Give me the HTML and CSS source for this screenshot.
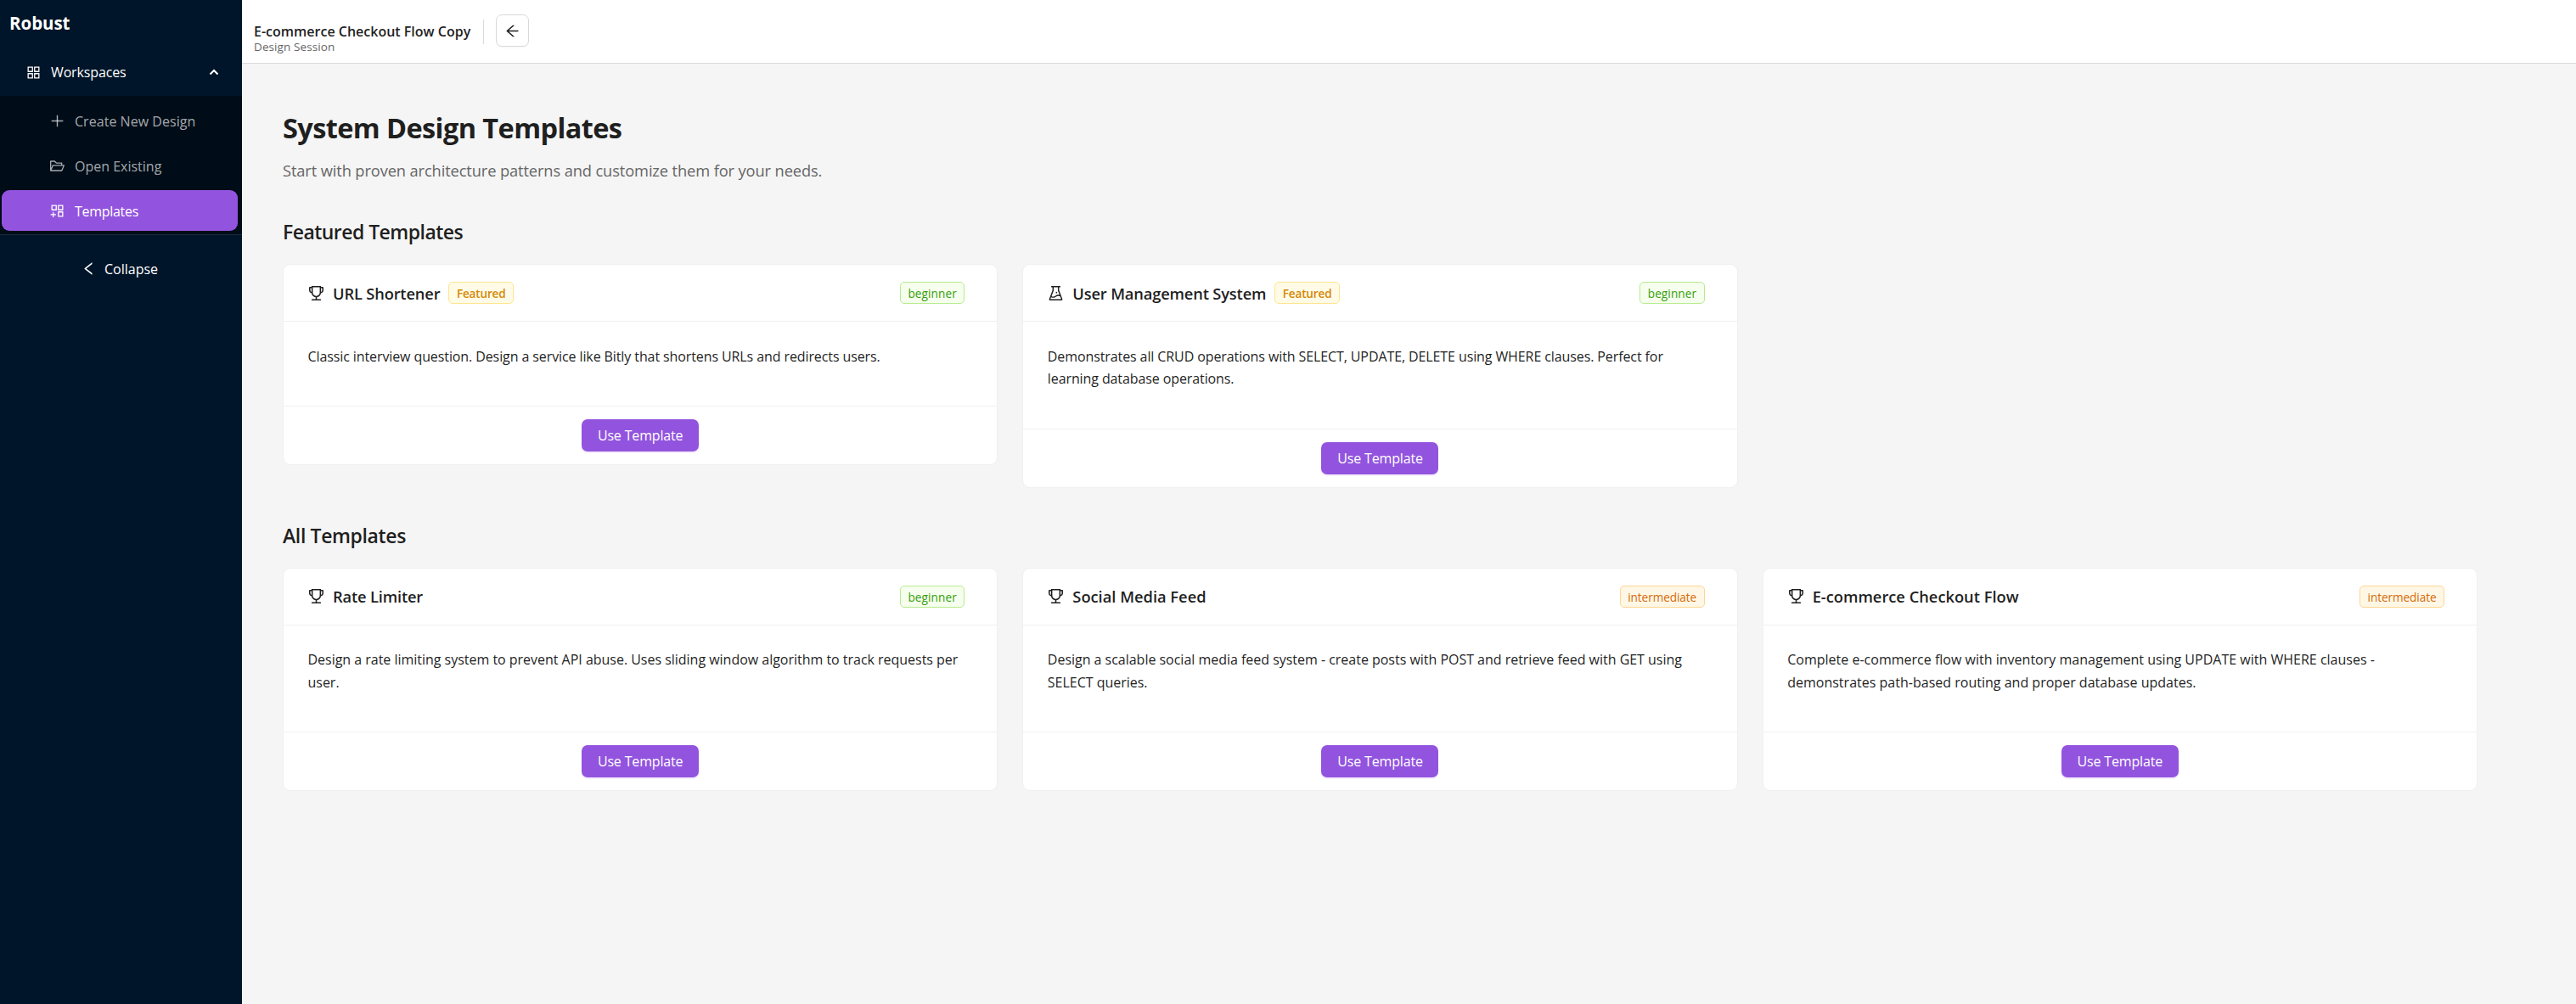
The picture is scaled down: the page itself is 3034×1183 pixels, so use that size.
FILE: index.html
```html
<!DOCTYPE html>
<html lang="en">
<head>
    <meta charset="UTF-8">
    <meta name="viewport" content="width=device-width, initial-scale=1.0">
    <title>Robust - Templates</title>
    <link rel="stylesheet" href="styles.css">
</head>
<body>

    <svg class="sprite" width="0" height="0">
        <symbol id="i-apps" viewBox="64 64 896 896"><path d="M464 144H160c-8.800 0-16 7.200-16 16v304c0 8.800 7.200 16 16 16h304c8.800 0 16-7.200 16-16V160c0-8.800-7.200-16-16-16zm-52 268H212V212h200v200zm452-268H560c-8.800 0-16 7.200-16 16v304c0 8.800 7.200 16 16 16h304c8.800 0 16-7.200 16-16V160c0-8.800-7.200-16-16-16zm-52 268H612V212h200v200zM464 544H160c-8.800 0-16 7.200-16 16v304c0 8.800 7.200 16 16 16h304c8.800 0 16-7.200 16-16V560c0-8.800-7.200-16-16-16zm-52 268H212V612h200v200zm452-268H560c-8.800 0-16 7.200-16 16v304c0 8.800 7.200 16 16 16h304c8.800 0 16-7.200 16-16V560c0-8.800-7.200-16-16-16zm-52 268H612V612h200v200z"/></symbol>
        <symbol id="i-apps-add" viewBox="64 64 896 896"><path d="M464 144H160c-8.800 0-16 7.200-16 16v304c0 8.800 7.200 16 16 16h304c8.800 0 16-7.200 16-16V160c0-8.800-7.200-16-16-16zm-52 268H212V212h200v200zm452-268H560c-8.800 0-16 7.200-16 16v304c0 8.800 7.200 16 16 16h304c8.800 0 16-7.200 16-16V160c0-8.800-7.200-16-16-16zm-52 268H612V212h200v200zm52 132H560c-8.800 0-16 7.200-16 16v304c0 8.800 7.200 16 16 16h304c8.800 0 16-7.200 16-16V560c0-8.800-7.200-16-16-16zm-52 268H612V612h200v200zM424 712H296V584c0-4.400-3.600-8-8-8h-48c-4.400 0-8 3.600-8 8v128H104c-4.400 0-8 3.600-8 8v48c0 4.400 3.600 8 8 8h128v128c0 4.400 3.600 8 8 8h48c4.400 0 8-3.600 8-8V776h128c4.400 0 8-3.600 8-8v-48c0-4.400-3.600-8-8-8z"/></symbol>
        <symbol id="i-plus" viewBox="64 64 896 896"><path d="M482 152h60q8 0 8 8v704q0 8-8 8h-60q-8 0-8-8V160q0-8 8-8z"/><path d="M160 474h704q8 0 8 8v60q0 8-8 8H160q-8 0-8-8v-60q0-8 8-8z"/></symbol>
        <symbol id="i-folder" viewBox="64 64 896 896"><path d="M928 444H820V330.400c0-17.700-14.300-32-32-32H473L355.700 186.200a8.150 8.150 0 00-5.500-2.200H96c-17.700 0-32 14.300-32 32v592c0 17.700 14.300 32 32 32h698c13 0 24.800-7.900 29.700-20l134-332c1.500-3.800 2.300-7.900 2.300-12 0-17.700-14.300-32-32-32zM136 256h188.500l119.600 114.400H748V444H238c-13 0-24.800 7.900-29.700 20L136 643.200V256zm635.300 512H159l103.300-256h612.400L771.300 768z"/></symbol>
        <symbol id="i-left" viewBox="64 64 896 896"><path d="M724 218.300V141c0-6.700-7.700-10.400-12.900-6.300L260.300 486.800a31.860 31.860 0 000 50.300l450.800 352.100c5.300 4.100 12.900.4 12.900-6.300v-77.300c0-4.900-2.300-9.600-6.100-12.600l-360-281 360-281.100c3.800-3 6.100-7.700 6.100-12.600z"/></symbol>
        <symbol id="i-arrow" viewBox="64 64 896 896"><path d="M872 474H286.900l350.200-304c5.600-4.900 2.200-14-5.200-14h-88.500c-3.900 0-7.600 1.400-10.500 3.900L155 487.800a31.960 31.960 0 000 48.300L535.100 866c1.500 1.300 3.300 2 5.200 2h91.500c7.400 0 10.800-9.200 5.200-14L286.900 550H872c4.400 0 8-3.600 8-8v-60c0-4.400-3.600-8-8-8z"/></symbol>
        <symbol id="i-trophy" viewBox="64 64 896 896"><path d="M868 160h-92v-40c0-4.400-3.600-8-8-8H256c-4.400 0-8 3.600-8 8v40h-92a44 44 0 00-44 44v148c0 81.700 60 149.600 138.200 162C265.700 630.200 359 721.700 476 734.500v105.200H280c-17.700 0-32 14.300-32 32V904c0 4.400 3.600 8 8 8h512c4.400 0 8-3.600 8-8v-32.300c0-17.700-14.300-32-32-32H548V734.500C665 721.700 758.300 630.200 773.800 514 852 501.600 912 433.700 912 352V204a44 44 0 00-44-44zM184 352V232h64v207.600a91.990 91.990 0 01-64-87.600zm520 128c0 49.100-19.100 95.400-53.900 130.100-34.800 34.800-81 53.900-130.100 53.900h-16c-49.100 0-95.400-19.100-130.100-53.900-34.800-34.800-53.900-81-53.900-130.100V184h384v296zm136-128c0 41-26.900 75.800-64 87.600V232h64v120z"/></symbol>
        <symbol id="i-flask" viewBox="64 64 896 896"><path d="M512 472a40 40 0 1080 0 40 40 0 10-80 0zm367 352.900L696.300 352V178H768v-68H256v68h71.700v174L145 824.900c-2.800 7.400-4.300 15.200-4.300 23.100 0 35.300 28.700 64 64 64h614.600c7.900 0 15.700-1.500 23.100-4.300 33-12.700 49.400-49.800 36.600-82.800zM395.700 364.700V180h232.600v184.700L719.200 600c-20.700-5.300-42.100-8-63.900-8-61.200 0-119.200 21.500-165.300 60a188.780 188.780 0 01-121.300 43.900c-32.700 0-64.100-8.300-91.800-23.700l118.800-307.500zM210.500 844l41.700-107.800c35.700 18.100 75.400 27.800 116.600 27.800 61.200 0 119.200-21.500 165.300-60 33.900-28.200 76.300-43.900 121.300-43.900 35 0 68.400 9.500 97.600 27.100L813.500 844h-603z"/></symbol>
    </svg>

    <div class="layout">
        <aside class="sidebar">
            <div class="brand">Robust</div>
            <div class="menu-title">
                <svg class="icon"><use href="#i-apps"/></svg>
                <span>Workspaces</span>
                <svg class="chevron" viewBox="0 0 12 8"><path d="M1.500 6.500 6 2l4.500 4.500"/></svg>
            </div>
            <nav class="submenu">
                <a class="item create"><svg class="icon"><use href="#i-plus"/></svg><span>Create New Design</span></a>
                <a class="item"><svg class="icon"><use href="#i-folder"/></svg><span>Open Existing</span></a>
                <a class="item active"><svg class="icon"><use href="#i-apps-add"/></svg><span>Templates</span></a>
            </nav>
            <div class="collapse"><svg class="icon"><use href="#i-left"/></svg><span>Collapse</span></div>
        </aside>

        <div class="main">
            <header class="topbar">
                <div class="session">
                    <div class="session-name">E-commerce Checkout Flow Copy</div>
                    <div class="session-type">Design Session</div>
                </div>
                <div class="divider"></div>
                <button class="back"><svg class="icon"><use href="#i-arrow"/></svg></button>
            </header>

            <main class="content">
                <h1>System Design Templates</h1>
                <p class="intro">Start with proven architecture patterns and customize them for your needs.</p>

                <h2>Featured Templates</h2>
                <div class="cards">
                    <div class="card">
                        <div class="card-head">
                            <svg class="icon"><use href="#i-trophy"/></svg>
                            <h3>URL Shortener</h3>
                            <span class="tag gold">Featured</span>
                            <span class="tag level green">beginner</span>
                        </div>
                        <p class="desc tight">Classic interview question. Design a service like Bitly that shortens URLs and redirects users.</p>
                        <div class="card-foot"><button class="use">Use Template</button></div>
                    </div>
                    <div class="card">
                        <div class="card-head">
                            <svg class="icon"><use href="#i-flask"/></svg>
                            <h3>User Management System</h3>
                            <span class="tag gold">Featured</span>
                            <span class="tag level green">beginner</span>
                        </div>
                        <p class="desc tight">Demonstrates all CRUD operations with SELECT, UPDATE, DELETE using WHERE clauses. Perfect for learning database operations.</p>
                        <div class="card-foot"><button class="use">Use Template</button></div>
                    </div>
                </div>

                <h2 class="all">All Templates</h2>
                <div class="cards">
                    <div class="card">
                        <div class="card-head">
                            <svg class="icon"><use href="#i-trophy"/></svg>
                            <h3>Rate Limiter</h3>
                            <span class="tag level green">beginner</span>
                        </div>
                        <p class="desc">Design a rate limiting system to prevent API abuse. Uses sliding window algorithm to track requests per user.</p>
                        <div class="card-foot"><button class="use">Use Template</button></div>
                    </div>
                    <div class="card">
                        <div class="card-head">
                            <svg class="icon"><use href="#i-trophy"/></svg>
                            <h3 class="wide">Social Media Feed</h3>
                            <span class="tag level orange">intermediate</span>
                        </div>
                        <p class="desc">Design a scalable social media feed system - create posts with POST and retrieve feed with GET using SELECT queries.</p>
                        <div class="card-foot"><button class="use">Use Template</button></div>
                    </div>
                    <div class="card">
                        <div class="card-head">
                            <svg class="icon"><use href="#i-trophy"/></svg>
                            <h3 class="wide">E-commerce Checkout Flow</h3>
                            <span class="tag level orange">intermediate</span>
                        </div>
                        <p class="desc wide">Complete e-commerce flow with inventory management using UPDATE with WHERE clauses - demonstrates path-based routing and proper database updates.</p>
                        <div class="card-foot"><button class="use">Use Template</button></div>
                    </div>
                </div>
            </main>
        </div>
    </div>

</body>
</html>
```

FILE: styles.css
```css
* {
    box-sizing: border-box;
}
body {
    margin: 0;
    font-family: "Open Sans", "Noto Sans", sans-serif;
    font-size: 16px;
    color: #1f1f1f;
    background: #f5f5f5;
}
h1, h2, h3, p {
    margin: 0;
}
button {
    font: inherit;
    padding: 0;
    cursor: pointer;
}
.sprite {
    display: none;
}
.icon {
    width: 17px;
    height: 17px;
    fill: currentColor;
    flex: none;
}
.layout {
    display: flex;
    min-height: 100vh;
}

/* Sidebar */
.sidebar {
    width: 285px;
    flex: none;
    background: #001529;
    color: #fff;
}
.brand {
    height: 57px;
    padding-left: 11px;
    font-size: 20.5px;
    font-weight: 700;
    line-height: 54px;
    letter-spacing: -0.05px;
}
.menu-title {
    display: flex;
    align-items: center;
    height: 56px;
    padding: 0 27px 0 31px;
    letter-spacing: -0.14px;
}
.menu-title span {
    margin-left: 12px;
}
.chevron {
    width: 12px;
    height: 8px;
    margin-left: auto;
    fill: none;
    stroke: #fff;
    stroke-width: 2;
}
.submenu {
    display: flex;
    flex-direction: column;
    gap: 5px;
    padding: 5px 5px 4px 2px;
    background: #000c17;
    border-bottom: 1px solid #1a2c3e;
}
.item {
    display: flex;
    align-items: center;
    gap: 12px;
    height: 48px;
    padding-left: 57px;
    border-radius: 9px;
    color: rgba(255, 255, 255, 0.65);
}
.item span {
    padding-top: 2px;
}
.item.create {
    letter-spacing: 0.04px;
}
.item.active {
    background: #9254de;
    color: #fff;
    letter-spacing: -0.29px;
}
.collapse {
    display: flex;
    align-items: center;
    gap: 10px;
    height: 79px;
    padding-left: 96px;
}

/* Header */
.main {
    flex: 1;
}
.topbar {
    display: flex;
    align-items: center;
    height: 75px;
    padding-left: 14px;
    background: #fff;
    border-bottom: 1px solid #d9d9d9;
}
.session {
    padding-top: 14px;
}
.session-name {
    font-weight: 600;
    line-height: 22px;
}
.session-type {
    font-size: 13.500px;
    line-height: 14px;
    letter-spacing: 0.1px;
    color: #666;
}
.divider {
    width: 1px;
    height: 29px;
    margin: 0 14px 0 15px;
    background: #d9d9d9;
}
.back {
    display: flex;
    align-items: center;
    justify-content: center;
    width: 39px;
    height: 38px;
    margin-bottom: 2px;
    color: #1f1f1f;
    background: #fff;
    border: 1px solid #d9d9d9;
    border-radius: 7px;
    box-shadow: 0 2px 0 rgba(0, 0, 0, 0.02);
}

/* Content */
.content {
    width: 2633px;
    padding: 53px 0 48px 48px;
}
h1 {
    font-size: 32.5px;
    line-height: 45px;
    letter-spacing: -0.6px;
}
.intro {
    margin-top: 13px;
    font-size: 18.300px;
    line-height: 30px;
    letter-spacing: -0.12px;
    color: #666;
}
h2 {
    margin-top: 40px;
    font-size: 23px;
    font-weight: 600;
    line-height: 34px;
    letter-spacing: -0.54px;
}
h2.all {
    margin-top: 39px;
    letter-spacing: -0.37px;
}
.cards {
    display: grid;
    grid-template-columns: repeat(3, 1fr);
    gap: 29px;
    align-items: start;
    margin-top: 21px;
}
.card {
    background: #fff;
    border: 1px solid #f0f0f0;
    border-radius: 9px;
}
.card-head {
    display: flex;
    align-items: center;
    height: 67px;
    padding: 0 38px 0 29px;
    border-bottom: 1px solid #f0f0f0;
}
.card-head .icon {
    width: 19px;
    height: 19px;
}
h3 {
    margin: 1px 10px 0;
    font-size: 18.300px;
    font-weight: 600;
    line-height: 26px;
    letter-spacing: -0.16px;
}
h3.wide {
    letter-spacing: 0;
}
.tag {
    height: 26px;
    padding: 0 8.500px;
    border: 1px solid;
    border-radius: 5px;
    font-size: 13.600px;
    line-height: 25px;
}
.level {
    margin-left: auto;
}
.gold {
    color: #d48806;
    background: #fffbe6;
    border-color: #ffe58f;
    font-weight: 600;
    letter-spacing: -0.19px;
}
.green {
    color: #389e0d;
    background: #f6ffed;
    border-color: #b7eb8f;
    letter-spacing: 0.1px;
}
.orange {
    color: #d46b08;
    background: #fff7e6;
    border-color: #ffd591;
    letter-spacing: -0.07px;
}
.desc {
    padding: 27.500px 28px 45px 28.500px;
    line-height: 26.500px;
    letter-spacing: -0.02px;
}
.desc.tight {
    letter-spacing: -0.1px;
}
.desc.wide {
    letter-spacing: 0.01px;
}
.card-foot {
    display: flex;
    justify-content: center;
    padding: 15px 0;
    border-top: 1px solid #f0f0f0;
}
.use {
    width: 138px;
    height: 38px;
    color: #fff;
    background: #9254de;
    border: 0;
    border-radius: 7px;
    box-shadow: 0 2px 0 rgba(146, 84, 222, 0.1);
    letter-spacing: -0.16px;
}
```
